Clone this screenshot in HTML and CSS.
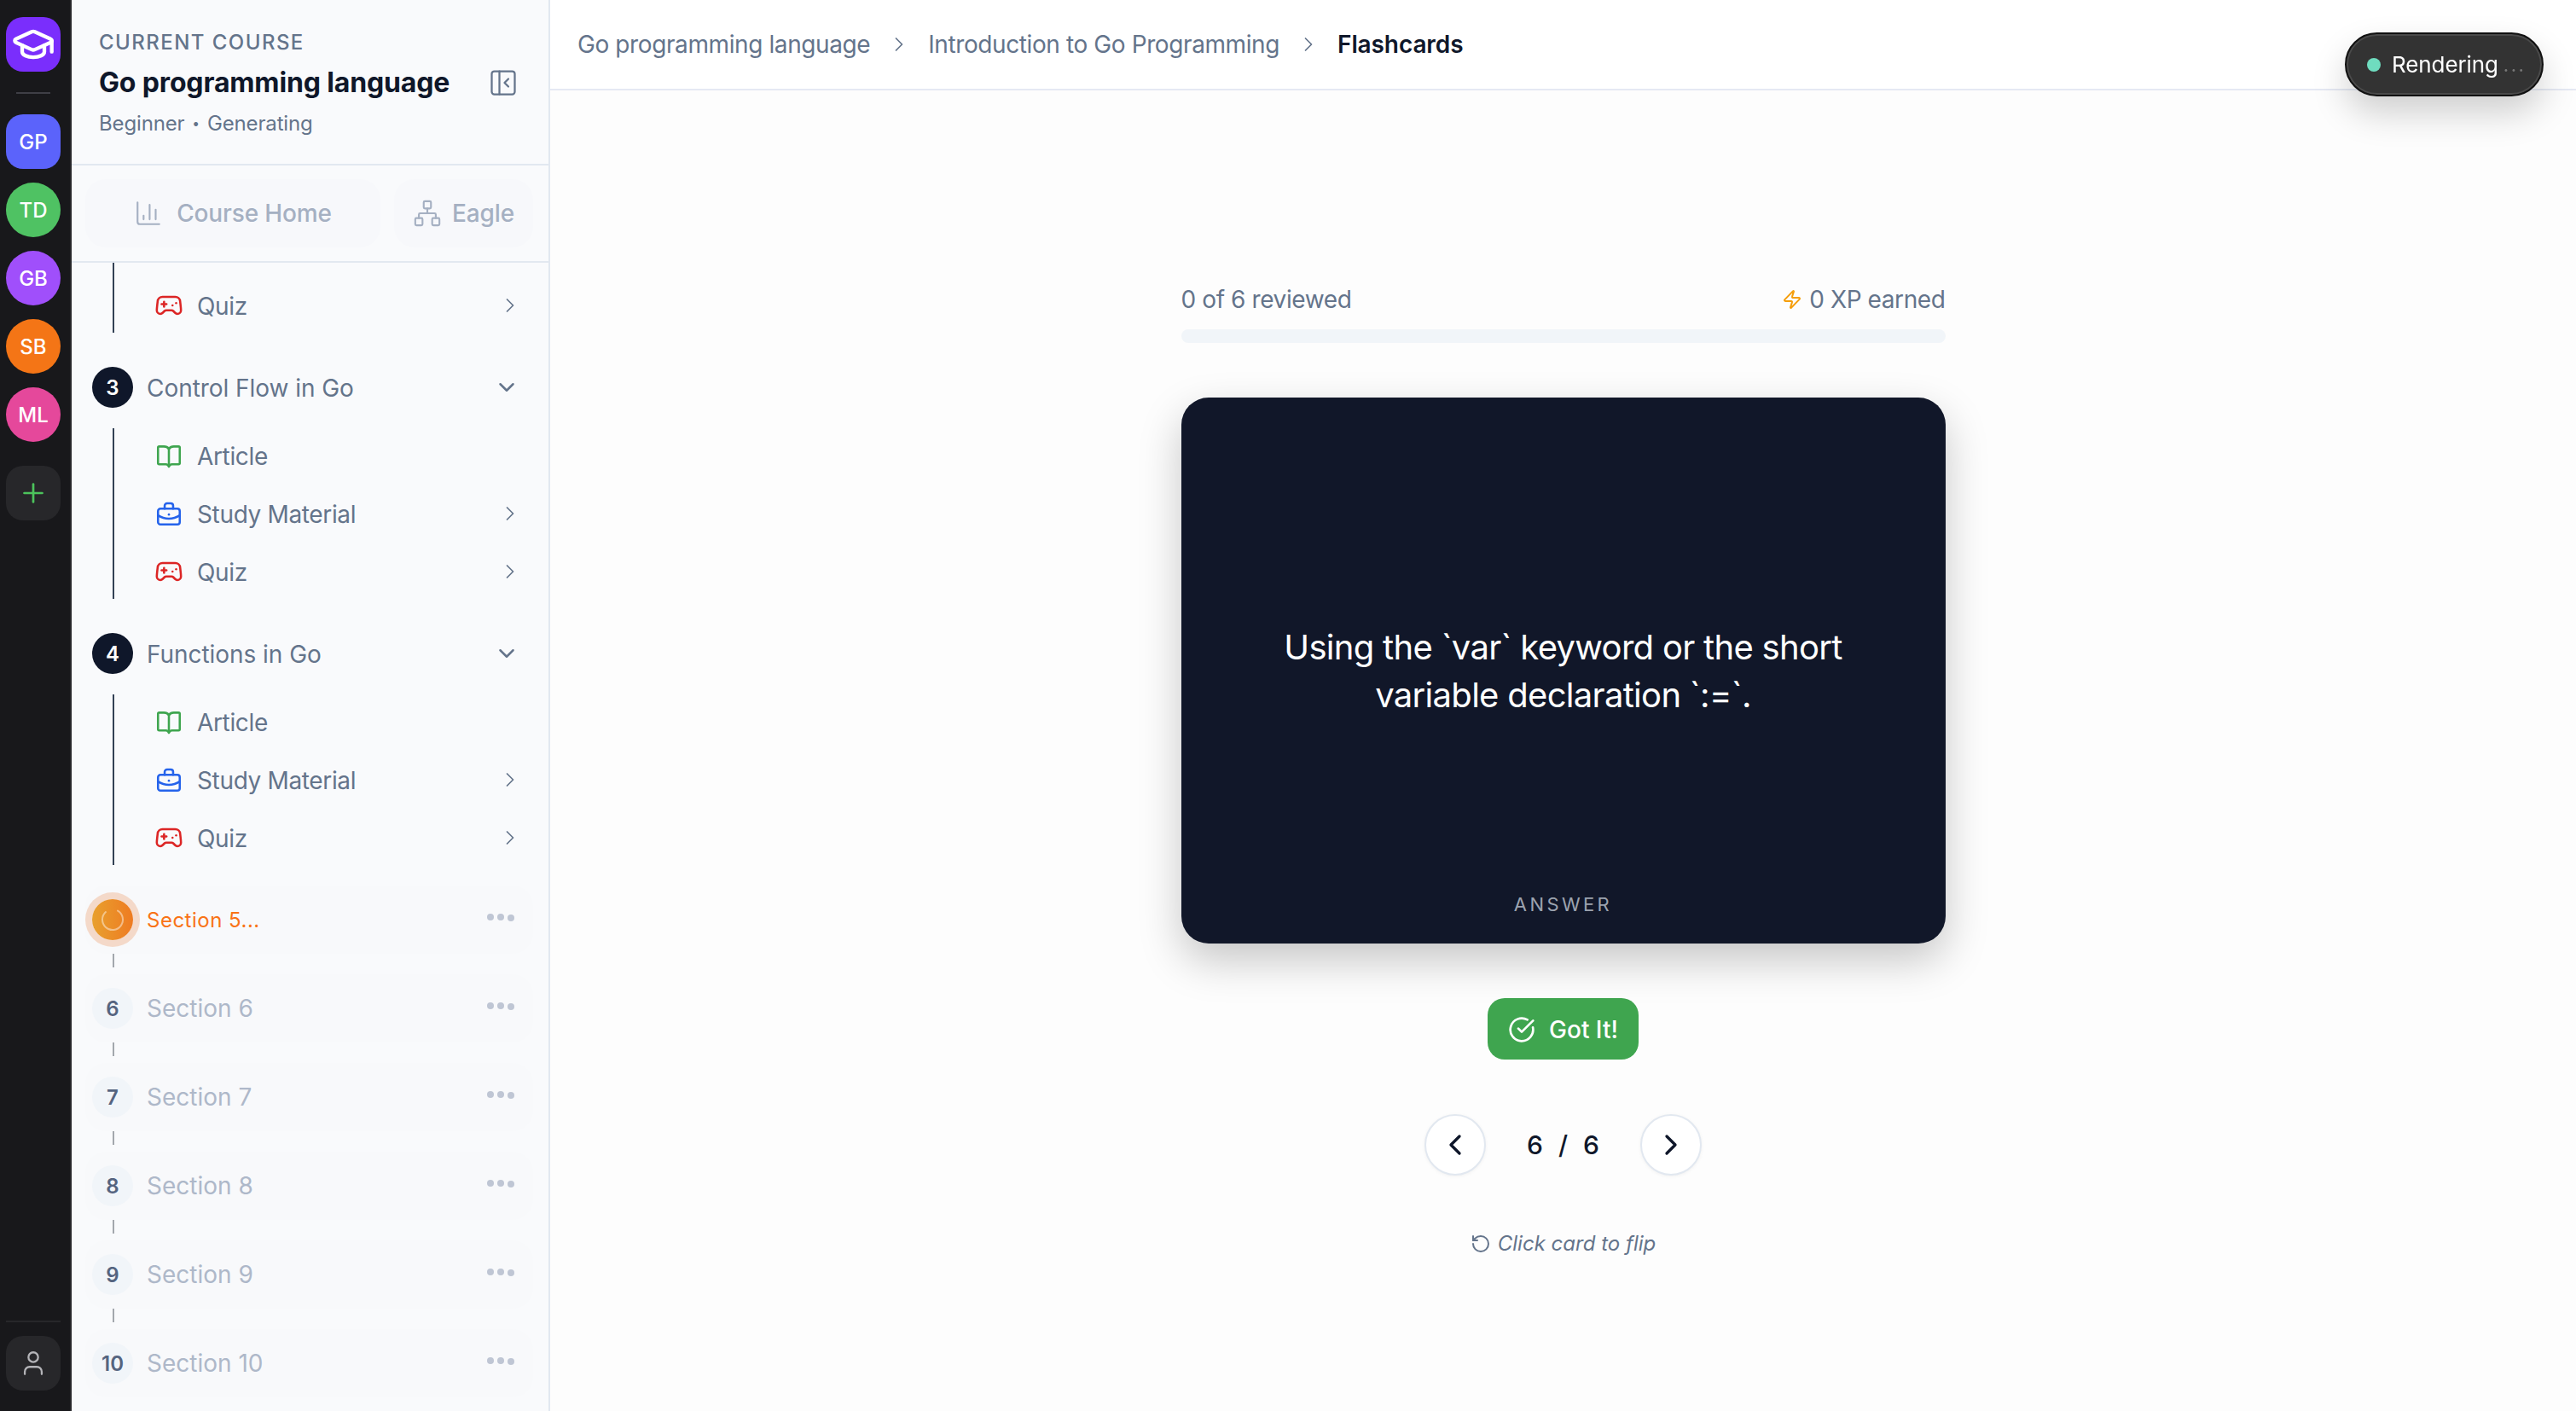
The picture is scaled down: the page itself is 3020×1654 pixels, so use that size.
FILE: index.html
```html
<!DOCTYPE html>
<html>
<head>
    <meta charset="UTF-8">
    <meta name="viewport" content="width=device-width, initial-scale=1.0">
    <title>Flashcards</title>
    <link rel="stylesheet" href="styles.css">
</head>
<body>
    <svg class="sprite" width="0" height="0">
        <symbol id="i-right" viewBox="0 0 24 24"><path d="m9 18 6-6-6-6"/></symbol>
        <symbol id="i-left" viewBox="0 0 24 24"><path d="m15 18-6-6 6-6"/></symbol>
        <symbol id="i-down" viewBox="0 0 24 24"><path d="m6 9 6 6 6-6"/></symbol>
        <symbol id="i-book" viewBox="0 0 24 24"><path d="M12 6.5C11 5.2 9.6 4.5 8 4.500H4a1 1 0 0 0-1 1v12.700a1 1 0 0 0 1 1h5.500c1.200 0 2 .6 2.500 2 .5-1.400 1.300-2 2.500-2H20a1 1 0 0 0 1-1V5.500a1 1 0 0 0-1-1h-4c-1.600 0-3 .7-4 2z"/><path d="M12 6.500V20"/></symbol>
        <symbol id="i-case" viewBox="0 0 24 24"><rect x="3" y="8" width="18" height="13" rx="2"/><path d="M8.500 8V5.500a2 2 0 0 1 2-2h3a2 2 0 0 1 2 2V8"/><path d="M3 13.500c2.800 1.800 5.800 2.700 9 2.700s6.200-.9 9-2.700"/><path d="M12 12.800h.01"/></symbol>
        <symbol id="i-game" viewBox="0 0 24 24"><path d="M6 11h4"/><path d="M8 9v4"/><path d="M15 12h.01"/><path d="M18 10h.01"/><path d="M17.320 5H6.680a4 4 0 0 0-3.978 3.590c-.006.052-.01.101-.017.152C2.604 9.416 2 14.456 2 16a3 3 0 0 0 3 3c1 0 1.500-.5 2-1l1.414-1.414A2 2 0 0 1 9.828 16h4.344a2 2 0 0 1 1.414.586L17 18c.5.5 1 1 2 1a3 3 0 0 0 3-3c0-1.545-.604-6.584-.685-7.258-.007-.05-.011-.1-.017-.151A4 4 0 0 0 17.320 5z"/></symbol>
        <symbol id="i-dots" viewBox="0 0 32 12"><circle cx="4" cy="5" r="4"/><circle cx="16" cy="5" r="4"/><circle cx="28" cy="6" r="4"/></symbol>
    </svg>

    <nav class="rail">
        <div class="rail-logo">
            <svg class="ico" width="52" height="52" viewBox="0 0 24 24"><path d="M21.420 10.922a1 1 0 0 0-.019-1.838L12.830 5.180a2 2 0 0 0-1.660 0L2.600 9.080a1 1 0 0 0 0 1.832l8.570 3.908a2 2 0 0 0 1.660 0z"/><path d="M22 10v6"/><path d="M6 12.500V16a6 3 0 0 0 12 0v-3.500"/></svg>
        </div>
        <div class="rail-line"></div>
        <div class="avatar square indigo">GP</div>
        <div class="avatar green">TD</div>
        <div class="avatar purple">GB</div>
        <div class="avatar orange">SB</div>
        <div class="avatar pink">ML</div>
        <div class="avatar square dark add">
            <svg class="ico plus" width="36" height="36" viewBox="0 0 24 24"><path d="M5 12h14"/><path d="M12 5v14"/></svg>
        </div>
        <div class="rail-bottom">
            <div class="avatar square dark">
                <svg class="ico user" width="34" height="34" viewBox="0 0 24 24"><path d="M19 21v-2a4 4 0 0 0-4-4H9a4 4 0 0 0-4 4v2"/><circle cx="12" cy="7" r="4"/></svg>
            </div>
        </div>
    </nav>

    <aside class="sidebar">
        <header class="course">
            <div class="course-label">CURRENT COURSE</div>
            <div class="course-title">
                <span>Go programming language</span>
                <svg class="ico thin" width="36" height="36" viewBox="0 0 24 24"><rect x="3" y="3" width="18" height="18" rx="2"/><path d="M9 3v18"/><path d="m16 15-3-3 3-3"/></svg>
            </div>
            <div class="course-meta">Beginner <span class="meta-sep">&bull;</span> Generating</div>
        </header>

        <div class="tabs">
            <div class="tab tab-wide">
                <svg class="ico thin" width="34" height="34" viewBox="0 0 24 24"><path d="M3 3v16a2 2 0 0 0 2 2h16"/><path d="M18 17V9"/><path d="M13 17V5"/><path d="M8 17v-3"/></svg>
                Course Home
            </div>
            <div class="tab tab-small">
                <svg class="ico thin" width="34" height="34" viewBox="0 0 24 24"><rect x="16" y="16" width="6" height="6" rx="1"/><rect x="2" y="16" width="6" height="6" rx="1"/><rect x="9" y="2" width="6" height="6" rx="1"/><path d="M5 16v-3a1 1 0 0 1 1-1h12a1 1 0 0 1 1 1v3"/><path d="M12 12V8"/></svg>
                Eagle
            </div>
        </div>

        <div class="outline">
            <ul class="lessons lessons-cut">
                <li class="lesson"><svg class="ico lesson-ico red"><use href="#i-game"/></svg><span>Quiz</span><svg class="ico more"><use href="#i-right"/></svg></li>
            </ul>

            <div class="section">
                <span class="num">3</span>
                <span class="section-name">Control Flow in Go</span>
                <svg class="ico toggle"><use href="#i-down"/></svg>
            </div>
            <ul class="lessons">
                <li class="lesson"><svg class="ico lesson-ico grn"><use href="#i-book"/></svg><span>Article</span></li>
                <li class="lesson"><svg class="ico lesson-ico blue"><use href="#i-case"/></svg><span>Study Material</span><svg class="ico more"><use href="#i-right"/></svg></li>
                <li class="lesson"><svg class="ico lesson-ico red"><use href="#i-game"/></svg><span>Quiz</span><svg class="ico more"><use href="#i-right"/></svg></li>
            </ul>

            <div class="section">
                <span class="num">4</span>
                <span class="section-name">Functions in Go</span>
                <svg class="ico toggle"><use href="#i-down"/></svg>
            </div>
            <ul class="lessons">
                <li class="lesson"><svg class="ico lesson-ico grn"><use href="#i-book"/></svg><span>Article</span></li>
                <li class="lesson"><svg class="ico lesson-ico blue"><use href="#i-case"/></svg><span>Study Material</span><svg class="ico more"><use href="#i-right"/></svg></li>
                <li class="lesson"><svg class="ico lesson-ico red"><use href="#i-game"/></svg><span>Quiz</span><svg class="ico more"><use href="#i-right"/></svg></li>
            </ul>

            <div class="pending first">
                <span class="num busy">
                    <svg class="ico spin" width="32" height="32" viewBox="0 0 24 24"><path d="M21 12a9 9 0 1 1-6.219-8.560"/></svg>
                </span>
                <span class="pending-name now">Section 5...</span>
                <svg class="dots"><use href="#i-dots"/></svg>
            </div>
            <div class="link"></div>
            <div class="pending"><span class="num idle">6</span><span class="pending-name">Section 6</span><svg class="dots"><use href="#i-dots"/></svg></div>
            <div class="link"></div>
            <div class="pending"><span class="num idle">7</span><span class="pending-name">Section 7</span><svg class="dots"><use href="#i-dots"/></svg></div>
            <div class="link"></div>
            <div class="pending"><span class="num idle">8</span><span class="pending-name">Section 8</span><svg class="dots"><use href="#i-dots"/></svg></div>
            <div class="link"></div>
            <div class="pending"><span class="num idle">9</span><span class="pending-name">Section 9</span><svg class="dots"><use href="#i-dots"/></svg></div>
            <div class="link"></div>
            <div class="pending"><span class="num idle">10</span><span class="pending-name">Section 10</span><svg class="dots"><use href="#i-dots"/></svg></div>
        </div>
    </aside>

    <main class="main">
        <div class="crumbs">
            <span>Go programming language</span>
            <svg class="ico crumb-sep"><use href="#i-right"/></svg>
            <span>Introduction to Go Programming</span>
            <svg class="ico crumb-sep"><use href="#i-right"/></svg>
            <span class="crumb-now">Flashcards</span>
        </div>

        <div class="deck">
            <div class="stats">
                <span>0 of 6 reviewed</span>
                <span class="xp">
                    <svg class="ico bolt" width="24" height="24" viewBox="0 0 24 24"><path d="M4 14a1 1 0 0 1-.78-1.630l9.900-10.200a.5.5 0 0 1 .86.46l-1.920 6.020A1 1 0 0 0 13 10h7a1 1 0 0 1 .78 1.630l-9.900 10.200a.5.5 0 0 1-.86-.46l1.920-6.020A1 1 0 0 0 11 14z"/></svg>
                    0 XP earned
                </span>
            </div>
            <div class="bar"></div>

            <div class="card">
                <div class="card-text">Using the `var` keyword or the short<br>variable declaration `:=`.</div>
                <div class="card-side">ANSWER</div>
            </div>

            <button class="got">
                <svg class="ico" width="32" height="32" viewBox="0 0 24 24"><path d="M21.801 10A10 10 0 1 1 17 3.335"/><path d="m9 11 3 3L22 4"/></svg>
                Got It!
            </button>

            <div class="pager">
                <button class="round"><svg class="ico pager-ico"><use href="#i-left"/></svg></button>
                <div class="count"><span>6</span><span>/</span><span>6</span></div>
                <button class="round"><svg class="ico pager-ico"><use href="#i-right"/></svg></button>
            </div>

            <div class="hint">
                <svg class="ico" width="24" height="24" viewBox="0 0 24 24"><path d="M3 12a9 9 0 1 0 9-9 9.750 9.750 0 0 0-6.740 2.740L3 8"/><path d="M3 3v5h5"/></svg>
                <em>Click card to flip</em>
            </div>
        </div>
    </main>

    <div class="toast">
        <span class="toast-dot"></span>
        <span>Rendering</span>
        <span class="toast-more">...</span>
    </div>
</body>
</html>
```

FILE: styles.css
```css
* {
    box-sizing: border-box;
}

html, body {
    height: 100%;
}

body {
    margin: 0;
    display: flex;
    overflow: hidden;
    font-family: Inter, 'Liberation Sans', sans-serif;
    background: #fdfdfd;
    color: #0f172a;
}

.sprite {
    position: absolute;
}

/* svg defaults, lucide style */
.ico {
    fill: none;
    stroke: currentColor;
    stroke-width: 2;
    stroke-linecap: round;
    stroke-linejoin: round;
    flex: none;
}

.ico.thin {
    stroke-width: 1.5;
}

/* left rail */
.rail {
    width: 84px;
    flex: none;
    display: flex;
    flex-direction: column;
    align-items: flex-start;
    gap: 16px;
    padding: 20px 0 24px 7px;
    background: #18181b;
    border-right: 2px solid #27272a;
}

.rail-logo {
    width: 64px;
    height: 64px;
    border-radius: 20px;
    background: #7a2efc;
    color: #fff;
    display: flex;
    align-items: center;
    justify-content: center;
}

.rail-line {
    width: 40px;
    height: 2px;
    margin: 8px 0 8px 12px;
    background: #3f3f46;
}

.avatar {
    width: 64px;
    height: 64px;
    border-radius: 50%;
    display: flex;
    align-items: center;
    justify-content: center;
    color: #fff;
    font-size: 24px;
    font-weight: 500;
}

.avatar.square {
    border-radius: 20px;
}

.avatar.add {
    margin-top: 12px;
}

.indigo { background: #5b63fb; }
.green { background: #4fc263; }
.purple { background: #a04ffb; }
.orange { background: #f47516; }
.pink { background: #e5489b; }
.dark { background: #27272a; }

.plus {
    color: #4cc35c;
    stroke-width: 1.8;
}

.user {
    color: #b4b4b8;
    stroke-width: 1.6;
}

.rail-bottom {
    margin-top: auto;
    border-top: 2px solid #27272a;
    padding-top: 16px;
}

/* course sidebar */
.sidebar {
    width: 561px;
    flex: none;
    display: flex;
    flex-direction: column;
    background: #f9fafc;
    border-right: 2px solid #e2e8f0;
    overflow: hidden;
}

.course {
    height: 194px;
    padding: 34px 35px 0 32px;
    border-bottom: 2px solid #e2e8f0;
}

.course-label {
    font-size: 24px;
    line-height: 32px;
    font-weight: 500;
    letter-spacing: 1.45px;
    color: #64748b;
}

.course-title {
    display: flex;
    justify-content: space-between;
    align-items: center;
    margin-top: 9px;
    font-size: 32px;
    line-height: 44px;
    font-weight: 700;
    letter-spacing: -0.15px;
    color: #0f172a;
}

.course-title .ico {
    color: #64748b;
}

.course-meta {
    margin-top: 10px;
    font-size: 24px;
    line-height: 32px;
    letter-spacing: -0.15px;
    color: #64748b;
}

.meta-sep {
    display: inline-block;
    transform: scale(0.65);
}

.tabs {
    display: flex;
    gap: 16px;
    padding: 16px 18px 16px 16px;
    border-bottom: 2px solid #e2e8f0;
}

.tab {
    height: 80px;
    border-radius: 24px;
    background: #f7f8fb;
    display: flex;
    align-items: center;
    justify-content: center;
    gap: 16px;
    font-size: 28px;
    font-weight: 500;
    letter-spacing: -0.15px;
    color: #a5b0c2;
}

.tab-wide {
    flex: 1;
}

.tab-small {
    width: 163px;
    gap: 12px;
}

.outline {
    flex: 1;
    padding: 0 18px 0 16px;
}

.section {
    height: 48px;
    margin: 40px 0 24px 8px;
    display: flex;
    align-items: center;
    font-size: 28px;
    color: #64748b;
}

.num {
    width: 48px;
    height: 48px;
    flex: none;
    border-radius: 50%;
    background: #0f172a;
    color: #fff;
    font-size: 24px;
    font-weight: 600;
    display: flex;
    align-items: center;
    justify-content: center;
    margin-right: 16px;
}

.section-name {
    flex: 1;
    padding-top: 2px;
    letter-spacing: -0.05px;
}

.toggle {
    width: 30px;
    height: 30px;
    margin-right: 16px;
}

.lessons {
    list-style: none;
    margin: 0 0 0 32px;
    padding: 0;
    border-left: 2px solid #334155;
    display: flex;
    flex-direction: column;
    gap: 4px;
}

.lessons-cut {
    padding-top: 18px;
}

.lesson {
    height: 64px;
    padding-left: 47px;
    display: flex;
    align-items: center;
    font-size: 28px;
    letter-spacing: -0.35px;
    color: #64748b;
}

.lesson span {
    padding-top: 2px;
}

.lesson-ico {
    width: 34px;
    height: 34px;
    margin-right: 16px;
    stroke-width: 1.8;
}

.red { color: #dc2626; }
.grn { color: #3fa54f; }
.blue { color: #2563eb; }

.more {
    width: 28px;
    height: 28px;
    margin-left: auto;
    margin-right: 13px;
    stroke-width: 1.5;
}

.pending {
    height: 80px;
    padding: 0 22px 0 8px;
    border-radius: 24px;
    background: #f8f9fb;
    display: flex;
    align-items: center;
}

.pending.first {
    margin-top: 24px;
}

.pending-name {
    flex: 1;
    font-size: 28px;
    color: #aeb8c9;
}

.pending-name.now {
    font-size: 24px;
    letter-spacing: 0.5px;
    color: #f97316;
}

.num.idle {
    background: #f1f5f9;
    color: #55647f;
}

.num.busy {
    background: linear-gradient(90deg, #e8a02e, #ee7b22);
    box-shadow: 0 0 0 8px #f4d9c9;
    color: rgba(255, 255, 255, 0.45);
}

.spin {
    stroke-width: 1.5;
    transform: rotate(-60deg);
}

.dots {
    width: 32px;
    height: 12px;
    fill: #bfc6d4;
    margin-bottom: 4px;
}

.link {
    width: 2px;
    height: 16px;
    margin: 0 0 8px 32px;
    background: #a3a7ad;
}

/* main area */
.main {
    flex: 1;
    min-width: 0;
    display: flex;
    flex-direction: column;
}

.crumbs {
    height: 106px;
    flex: none;
    padding: 0 32px;
    display: flex;
    align-items: center;
    background: #fff;
    border-bottom: 2px solid #e5e9f3;
    font-size: 28px;
    letter-spacing: -0.4px;
    color: #64748b;
}

.crumb-sep {
    width: 28px;
    height: 28px;
    margin: 0 20px;
    stroke-width: 1.5;
}

.crumb-now {
    font-weight: 600;
    letter-spacing: -0.1px;
    color: #0f172a;
}

.deck {
    width: 896px;
    margin: 0 auto;
    padding-top: 224px;
    display: flex;
    flex-direction: column;
    align-items: center;
}

.stats {
    width: 100%;
    height: 40px;
    padding-top: 2px;
    display: flex;
    justify-content: space-between;
    font-size: 28px;
    line-height: 38px;
    letter-spacing: -0.4px;
    color: #64748b;
}

.xp {
    display: flex;
    align-items: center;
    gap: 8px;
}

.bolt {
    color: #f59e0b;
}

.bar {
    width: 100%;
    height: 16px;
    margin-top: 16px;
    border-radius: 8px;
    background: #f1f5f9;
}

.card {
    width: 100%;
    height: 640px;
    margin-top: 64px;
    padding: 32px 32px 30px;
    border-radius: 32px;
    background: #111729;
    box-shadow: 0 20px 50px rgba(0, 0, 0, 0.22);
    display: grid;
    grid-template-rows: 1fr auto 1fr;
    justify-items: center;
}

.card-text {
    grid-row: 2;
    font-size: 40px;
    line-height: 56px;
    letter-spacing: -0.7px;
    text-align: center;
    color: #fff;
}

.card-side {
    grid-row: 3;
    align-self: end;
    font-size: 22px;
    line-height: 32px;
    letter-spacing: 3.4px;
    color: #9ca3af;
}

button {
    font-family: inherit;
    border: none;
    cursor: pointer;
}

.got {
    height: 72px;
    margin-top: 64px;
    padding: 2px 24px 0;
    border-radius: 20px;
    background: #3fa54f;
    color: #fff;
    font-size: 28px;
    font-weight: 500;
    display: flex;
    align-items: center;
    gap: 16px;
}

.pager {
    margin-top: 64px;
    display: flex;
    align-items: center;
}

.round {
    width: 72px;
    height: 72px;
    padding: 0;
    border-radius: 50%;
    border: 2px solid #e2e8f0;
    background: #fff;
    color: #0f172a;
    display: flex;
    align-items: center;
    justify-content: center;
    box-shadow: 0 1px 4px rgba(0, 0, 0, 0.05);
}

.pager-ico {
    width: 40px;
    height: 40px;
}

.count {
    width: 181px;
    display: flex;
    justify-content: center;
    gap: 18px;
    font-size: 30px;
    font-weight: 500;
}

.hint {
    margin-top: 64px;
    display: flex;
    align-items: center;
    gap: 8px;
    font-size: 24px;
    line-height: 32px;
    color: #64748b;
}

/* floating status */
.toast {
    position: fixed;
    top: 38px;
    left: 2749px;
    width: 233px;
    height: 75px;
    padding-left: 24px;
    border-radius: 38px;
    border: 2px solid #111;
    background: #333;
    box-shadow: inset 0 0 0 2px #4a4a4a, 0 20px 40px rgba(0, 0, 0, 0.18);
    display: flex;
    align-items: center;
    color: #fff;
    font-size: 26px;
    letter-spacing: -0.1px;
}

.toast-dot {
    width: 16px;
    height: 16px;
    margin-right: 13px;
    border-radius: 50%;
    background: #6fdcbf;
}

.toast-more {
    margin-left: 6px;
    font-size: 22px;
    letter-spacing: 2.5px;
    color: #777;
}
```
